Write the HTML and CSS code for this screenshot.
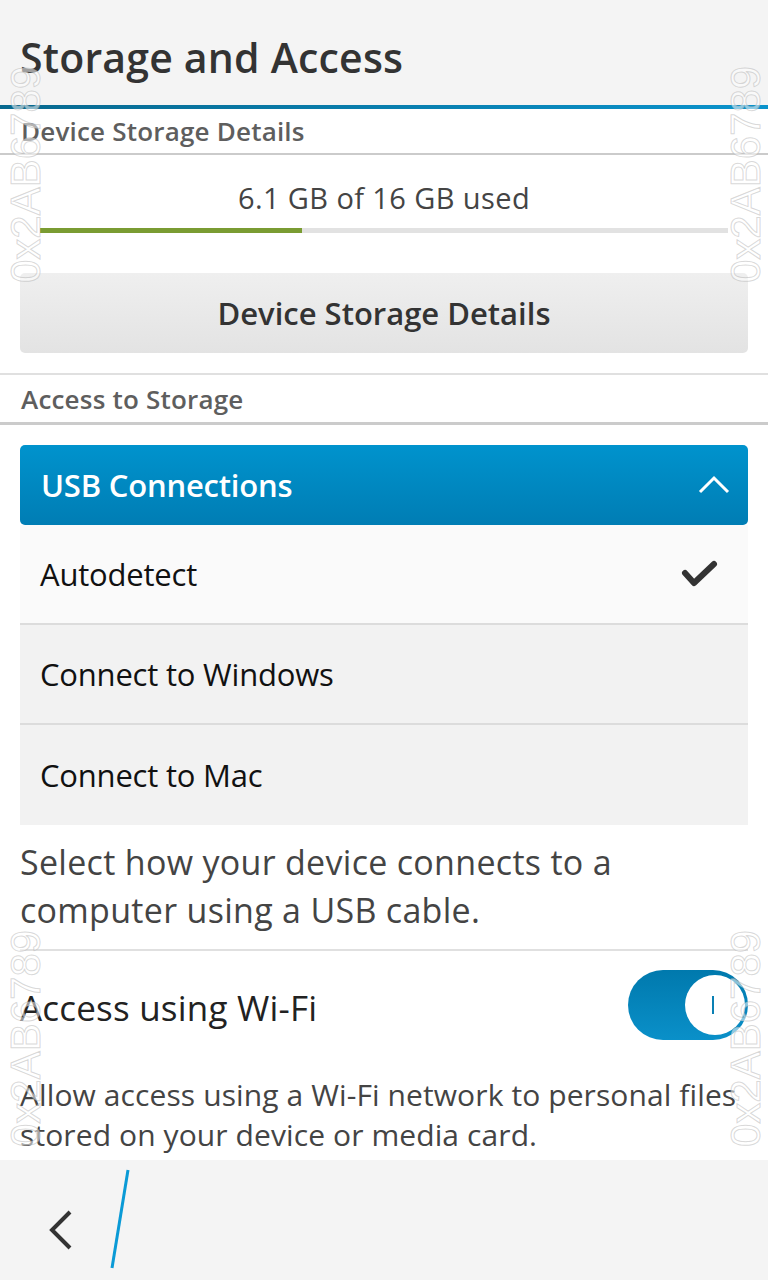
FILE: index.html
```html
<!DOCTYPE html>
<html lang="en">
<head>
<meta charset="utf-8">
<title>Storage and Access</title>
<link rel="stylesheet" href="styles.css">
</head>
<body>
<div class="screen">
  <header class="titlebar">
    <h1 class="title">Storage and Access</h1>
  </header>
  <div class="accent"></div>
  <main class="content">
    <div class="section-head">Device Storage Details</div>
    <div class="usage">
      <div class="usage-label">6.1 GB of 16 GB used</div>
      <div class="bar"><div class="bar-fill" style="width:38.1%"></div></div>
    </div>
    <button class="btn">Device Storage Details</button>
    <div class="section-head second">Access to Storage</div>
    <div class="dropdown">
      <div class="dd-head">
        <span>USB Connections</span>
        <svg class="chev" width="32" height="20" viewBox="0 0 32 20"><polyline points="2,17 16,3 30,17" fill="none" stroke="#fff" stroke-width="3"/></svg>
      </div>
      <div class="dd-item selected">
        <span>Autodetect</span>
        <svg class="check" width="40" height="30" viewBox="0 0 40 30"><polyline points="5,14 14,24 34,5" fill="none" stroke="#333" stroke-width="6" stroke-linecap="round" stroke-linejoin="round"/></svg>
      </div>
      <div class="dd-item">Connect to Windows</div>
      <div class="dd-item last">Connect to Mac</div>
    </div>
    <p class="help">Select how your device connects to a computer using a USB cable.</p>
    <div class="toggle-row">
      <span class="toggle-label">Access using Wi-Fi</span>
      <div class="toggle"><div class="knob"><span class="knob-mark"></span></div></div>
    </div>
    <p class="help small">Allow access using a Wi-Fi network to personal files stored on your device or media card.</p>
  </main>
  <footer class="actionbar">
    <svg class="back" width="40" height="50" viewBox="0 0 40 50"><polyline points="30,7 12,25 30,43" fill="none" stroke="#333" stroke-width="4"/></svg>
    <svg class="slash" width="30" height="110" viewBox="0 0 30 110"><line x1="24" y1="5" x2="8" y2="103" stroke="#0a9ad6" stroke-width="3"/></svg>
  </footer>
  <div class="wm wm-l1">0x2AB6789</div>
  <div class="wm wm-r1">0x2AB6789</div>
  <div class="wm wm-l2">0x2AB6789</div>
  <div class="wm wm-r2">0x2AB6789</div>
</div>
</body>
</html>
```
FILE: styles.css
```css
* { box-sizing: border-box; }
html, body { margin: 0; padding: 0; }
body {
  width: 768px;
  height: 1280px;
  overflow: hidden;
  background: #fff;
  font-family: "Open Sans", Lato, sans-serif;
}
.screen {
  position: relative;
  width: 768px;
  height: 1280px;
  display: flex;
  flex-direction: column;
  overflow: hidden;
}
.titlebar {
  height: 105px;
  background: #f4f4f4;
  padding: 34px 20px 0;
  flex: none;
}
.title {
  margin: 0;
  font-size: 41px;
  line-height: 46px;
  font-weight: 600;
  color: #333;
  letter-spacing: 0.2px;
}
.accent {
  height: 4px;
  flex: none;
  background: linear-gradient(90deg, #08698f, #0a93cc);
}
.content {
  flex: 1;
  overflow: hidden;
  display: flex;
  flex-direction: column;
}
.section-head {
  height: 46px;
  display: flex;
  align-items: center;
  padding: 0 21px;
  font-size: 26px;
  font-weight: 600;
  color: #5e5e5e;
  letter-spacing: 0.2px;
  border-bottom: 2px solid #cbcbcb;
  flex: none;
}
.section-head.second {
  margin-top: 20px;
  height: 52px;
  border-top: 2px solid #e0e0e0;
  border-bottom: 3px solid #cbcbcb;
}
.usage {
  padding: 23px 40px 0;
  flex: none;
}
.usage-label {
  text-align: center;
  font-size: 29px;
  line-height: 40px;
  color: #444;
  letter-spacing: 0.4px;
}
.bar {
  margin-top: 10px;
  height: 5px;
  background: #e2e2e2;
}
.bar-fill {
  height: 100%;
  background: #7a9c32;
}
.btn {
  margin: 40px 20px 0;
  height: 80px;
  flex: none;
  border: none;
  border-radius: 5px;
  background: linear-gradient(#efefef, #e3e3e3);
  font-family: inherit;
  font-size: 31px;
  font-weight: 600;
  color: #333;
  letter-spacing: 0;
  padding: 0;
}
.dropdown {
  margin: 20px 20px 0;
  flex: none;
}
.dd-head {
  height: 80px;
  border-radius: 5px;
  background: linear-gradient(#0093cd, #007db4);
  color: #fff;
  font-size: 31px;
  font-weight: 600;
  letter-spacing: -0.2px;
  display: flex;
  align-items: center;
  justify-content: space-between;
  padding: 0 18px 0 21px;
}
.dd-item {
  height: 100px;
  border-bottom: 2px solid #dcdcdc;
  background: #f2f2f2;
  display: flex;
  align-items: center;
  justify-content: space-between;
  padding: 0 28px 0 20px;
  font-size: 31px;
  color: #111;
  letter-spacing: -0.2px;
}
.dd-item.selected { background: #fafafa; }
.dd-item.last { border-bottom: none; }
.help {
  margin: 13px 20px 0;
  font-size: 34px;
  line-height: 48px;
  color: #444;
  letter-spacing: 0.3px;
  padding-bottom: 15px;
  border-bottom: 2px solid #e0e0e0;
  flex: none;
}
.help.small {
  margin-top: 35px;
  font-size: 30px;
  line-height: 40px;
  letter-spacing: 0.1px;
  border-bottom: none;
  padding-bottom: 0;
  margin-right: 16px;
}
.toggle-row {
  margin: 19px 20px 0;
  display: flex;
  align-items: center;
  justify-content: space-between;
  flex: none;
}
.toggle-label {
  font-size: 35px;
  color: #222;
  letter-spacing: 0.2px;
  padding-top: 4px;
}
.toggle {
  width: 120px;
  height: 70px;
  border-radius: 35px;
  background: linear-gradient(#0079ad, #0a90c9);
  display: flex;
  align-items: center;
  justify-content: flex-end;
  padding-right: 3px;
}
.knob {
  width: 60px;
  height: 60px;
  border-radius: 50%;
  background: #fff;
  display: flex;
  align-items: center;
  justify-content: center;
}
.knob-mark {
  width: 2px;
  height: 18px;
  background: #0a80b4;
  margin-left: -4px;
}
.actionbar {
  height: 120px;
  flex: none;
  background: #f4f4f4;
  display: flex;
  align-items: flex-start;
}
.back { margin: 45px 0 0 40px; }
.slash { margin: 5px 0 0 24px; }
.wm {
  position: absolute;
  width: 212px;
  height: 34px;
  font-family: "Liberation Sans", sans-serif;
  font-size: 42px;
  line-height: 34px;
  color: rgba(255,255,255,0.55);
  -webkit-text-stroke: 1px rgba(170,170,170,0.45);
  transform: rotate(-90deg);
  white-space: nowrap;
  text-align: center;
  pointer-events: none;
}
.wm-l1 { left: -80px; top: 160px; }
.wm-r1 { left: 640px; top: 160px; }
.wm-l2 { left: -80px; top: 1024px; }
.wm-r2 { left: 640px; top: 1024px; }
```
